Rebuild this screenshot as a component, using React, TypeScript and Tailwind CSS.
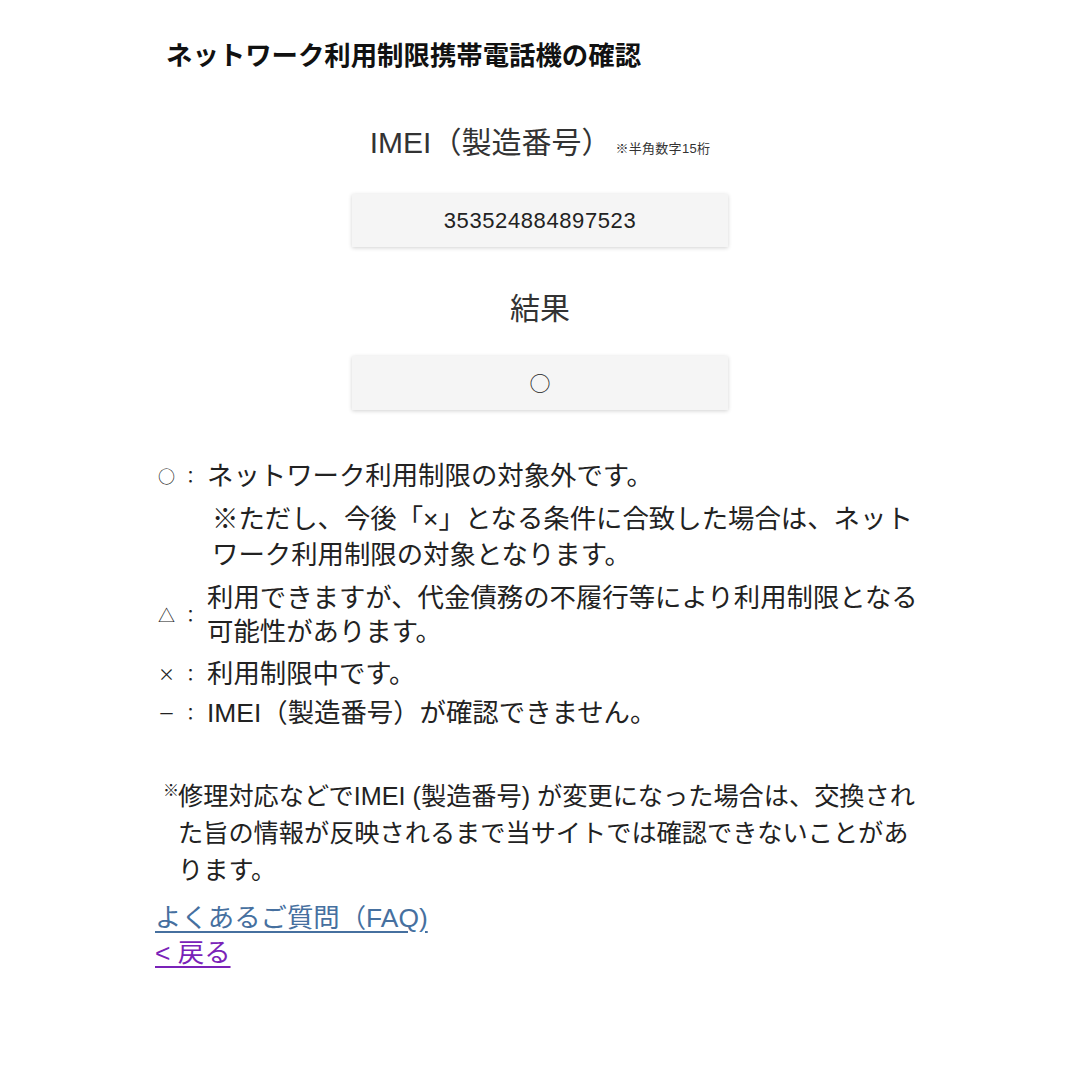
import React from "react";

const font = { fontFamily: '"Liberation Sans", "Noto Sans CJK JP", sans-serif' };
const cjk = { fontFamily: '"Noto Sans CJK JP", sans-serif' };

function Sym({ s }: { s: string }) {
  return (
    <div className="flex w-[52px] shrink-0 items-center pl-[3px] text-[17px] text-[#222]" style={cjk}>
      <span className="inline-block w-[24px]">{s}</span>
      <span className="inline-block w-[17px] text-center">：</span>
    </div>
  );
}

export default function App() {
  return (
    <div className="min-h-[1080px] w-full bg-white text-[#222]" style={font}>
      <div className="mx-auto w-[770px] pt-[37px]">
        <h1 className="pl-[11px] text-[26.4px] font-bold leading-[38px] text-[#111]">
          ネットワーク利用制限携帯電話機の確認
        </h1>

        <div className="mt-[46px] flex items-baseline justify-center text-[#333]">
          <span className="text-[30px] leading-[44px]">IMEI（製造番号）</span>
          <span className="ml-[4px] text-[13px] tracking-[0.3px]">※半角数字15桁</span>
        </div>

        <div className="mx-auto mt-[29px] flex h-[53px] w-[376px] items-center justify-center bg-[#f5f5f5] text-[22px] tracking-[0.6px] text-[#222] shadow-[0_1px_4px_rgba(0,0,0,0.18)]">
          353524884897523
        </div>

        <div className="mt-[40px] text-center text-[30px] leading-[44px] text-[#333]">結果</div>

        <div
          className="mx-auto mt-[25px] flex h-[54px] w-[376px] items-center justify-center bg-[#f5f5f5] text-[21px] text-[#222] shadow-[0_1px_4px_rgba(0,0,0,0.18)]"
          style={cjk}
        >
          ○
        </div>

        <div className="mt-[49px] flex flex-col text-[26.4px]">
          <div>
            <div className="flex items-center leading-[34px]">
              <Sym s="○" />
              <span>ネットワーク利用制限の対象外です。</span>
            </div>
            <p className="mt-[8px] whitespace-nowrap pl-[57px] leading-[36px]">
              ※ただし、今後「×」となる条件に合致した場合は、ネット
              <br />
              ワーク利用制限の対象となります。
            </p>
          </div>
          <div className="mt-[8px] flex items-center leading-[34px]">
            <Sym s="△" />
            <span className="whitespace-nowrap">
              利用できますが、代金債務の不履行等により利用制限となる
              <br />
              可能性があります。
            </span>
          </div>
          <div className="mt-[8px] flex items-center leading-[34px]">
            <Sym s="×" />
            <span>利用制限中です。</span>
          </div>
          <div className="mt-[5px] flex items-center leading-[34px]">
            <Sym s="－" />
            <span>IMEI（製造番号）が確認できません。</span>
          </div>
        </div>

        <div className="mt-[48px] flex text-[25.2px] leading-[37px]">
          <span className="w-[23px] shrink-0 pl-[8px] text-[16px] leading-[22px]" style={cjk}>
            ※
          </span>
          <p className="whitespace-nowrap">
            修理対応などでIMEI (製造番号) が変更になった場合は、交換され
            <br />
            た旨の情報が反映されるまで当サイトでは確認できないことがあ
            <br />
            ります。
          </p>
        </div>

        <div className="mt-[12px] flex flex-col items-start text-[26.4px] leading-[35px]">
          <a href="#" className="text-[#46709f] underline underline-offset-4">
            よくあるご質問（FAQ)
          </a>
          <a href="#" className="text-[#7a22b8] underline underline-offset-4">
            &lt; 戻る
          </a>
        </div>
      </div>
    </div>
  );
}
